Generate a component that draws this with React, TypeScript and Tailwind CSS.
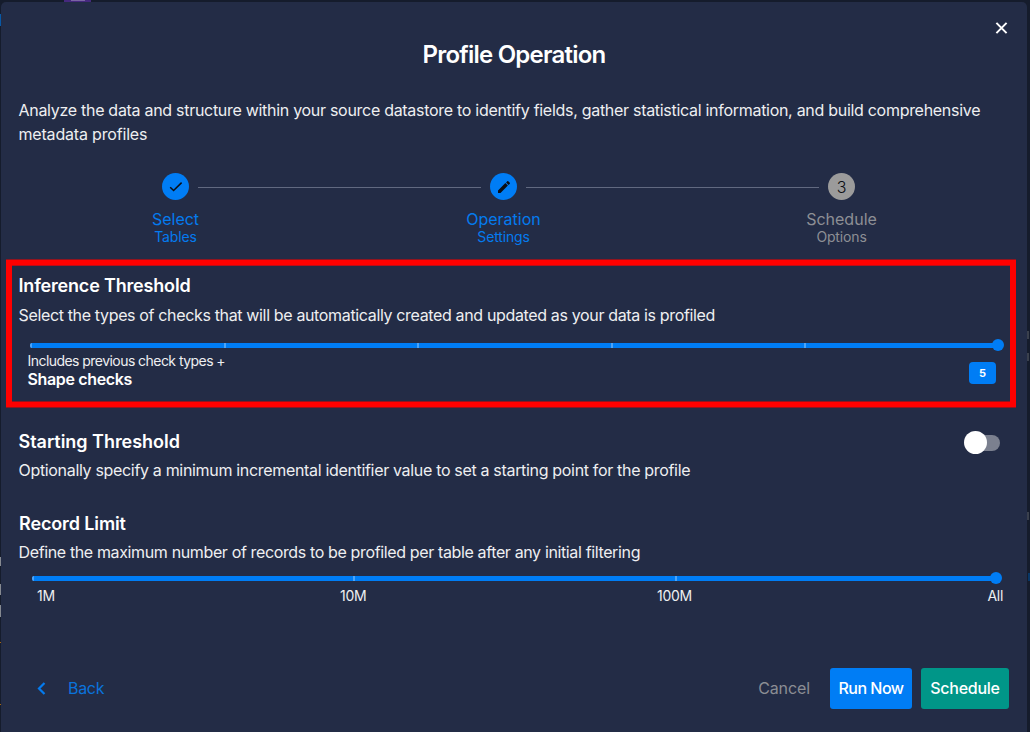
import type { ReactNode } from "react";

function Step({ title, subtitle, tone, children }: { title: string; subtitle: string; tone: "active" | "idle"; children: ReactNode }) {
  const active = tone === "active";
  return (
    <div className={`flex w-[27px] shrink-0 flex-col items-center whitespace-nowrap ${active ? "text-[#047bef]" : "text-[#8d8f95]"}`}>
      <div className={`flex size-[27px] shrink-0 items-center justify-center rounded-full text-[#0b0e14] ${active ? "bg-[#007df5]" : "bg-[#9b9b9b]"}`}>
        {children}
      </div>
      <div className="mt-[9px] h-5 text-[16px] leading-5">{title}</div>
      <div className="h-4 text-[14px] leading-4 tracking-[-0.15px]">{subtitle}</div>
    </div>
  );
}

function Slider({ ticks }: { ticks: number }) {
  return (
    <div className="relative h-[5px] rounded-l-sm bg-[#007df5]">
      {Array.from({ length: ticks }, (_, i) => (
        <span key={i} className="absolute top-0 h-[5px] w-[2px] bg-[#4da4f8] first:rounded-l-sm" style={{ left: `${(i * 100) / ticks}%` }} />
      ))}
      <span className="absolute -right-[6px] -top-[4px] size-[12px] rounded-full bg-[#007df5]" />
    </div>
  );
}

export default function App() {
  return (
    <div className="relative h-[732px] w-[1030px] overflow-hidden bg-[#151c2c] pl-px pt-[2px] font-['Inter',sans-serif] text-[16px] text-[#eeeff1]">
      <div className="absolute left-[64px] top-0 h-[2px] w-[27px] bg-[#45297e]" />
      <div className="absolute left-[71px] top-0 h-px w-[14px] bg-[#7a64a3]" />
      <div className="absolute left-0 top-[14px] h-[12px] w-px bg-[#0858a5]" />
      <div className="absolute left-0 top-[557px] h-[9px] w-px bg-[#858991]" />
      <div className="absolute left-0 top-[584px] h-[11px] w-px bg-[#858991]" />
      <div className="absolute left-0 top-[605px] h-[12px] w-px bg-[#858991]" />
      <div className="absolute left-0 top-[642px] h-px w-px bg-[#a4650f]" />
      <div className="absolute left-0 top-[704px] h-px w-px bg-[#a4650f]" />
      <div className="absolute left-[1027px] top-[331px] h-[8px] w-[2px] bg-[#3a404d]" />
      <div className="absolute left-[1027px] top-[353px] h-[8px] w-[2px] bg-[#3a404d]" />
      <div className="absolute left-[1027px] top-[512px] h-[8px] w-[2px] bg-[#3a404d]" />
      <div className="absolute left-[1028px] top-[573px] h-[8px] w-[2px] bg-[#083767]" />

      <div className="relative flex h-[736px] w-[1026px] flex-col rounded-[5px] bg-[#232c46]">
        <button className="absolute left-[994px] top-[20px]" aria-label="Close">
          <svg width="13" height="12" viewBox="0 0 13 12" stroke="#fff" strokeWidth="2" fill="none">
            <path d="M1.4 0.9 11.6 11.1M11.6 0.9 1.4 11.1" />
          </svg>
        </button>
        <h1 className="mt-[37px] h-8 whitespace-nowrap text-center text-[24px] font-semibold leading-8 tracking-[-0.77px] text-white">Profile Operation</h1>
        <p className="ml-[17.5px] mt-[27px] h-12 whitespace-nowrap leading-6 tracking-[-0.292px]">
          Analyze the data and structure within your source datastore to identify fields, gather statistical information, and build comprehensive
          <br />
          <span className="tracking-[-0.18px]">metadata profiles</span>
        </p>

        <div className="ml-[161px] mt-[27px] flex h-[86px] w-[693px] items-start">
          <Step title="Select" subtitle="Tables" tone="active">
            <svg width="14" height="14" viewBox="0 0 14 14" fill="none" stroke="#0b0e14" strokeWidth="1.5">
              <path d="M1.2 7.2 4.6 10.5 12.6 2.6" />
            </svg>
          </Step>
          <div className="mx-[9px] mt-[14px] h-px w-[283px] bg-[#616980]" />
          <Step title="Operation" subtitle="Settings" tone="active">
            <svg width="16" height="16" viewBox="0 0 24 24" fill="#0b0e14">
              <path d="M20.71 7.04c.39-.39.39-1.04 0-1.41l-2.34-2.34c-.37-.39-1.02-.39-1.41 0l-1.84 1.83 3.75 3.75M3 17.25V21h3.75L17.81 9.93l-3.75-3.75z" />
            </svg>
          </Step>
          <div className="mx-[9px] mt-[14px] h-px w-[293px] bg-[#616980]" />
          <Step title="Schedule" subtitle="Options" tone="idle">
            <span className="text-[16px] font-light leading-none">3</span>
          </Step>
        </div>

        <section className="ml-[5px] mt-px h-[147px] w-[1010px] border-x-[6px] border-y-[5px] border-[#ff0000] pl-[6.5px] pt-[9px] shadow-[0_-1px_#90141f,0_1px_#90141f,inset_0_1px_#b80d18,inset_0_-1px_#90141f]">
          <h2 className="h-6 whitespace-nowrap text-[18px] font-semibold leading-6 tracking-[-0.18px] text-white">Inference Threshold</h2>
          <p className="mt-[5px] h-6 whitespace-nowrap leading-6 tracking-[-0.35px]">Select the types of checks that will be automatically created and updated as your data is profiled</p>
          <div className="ml-[11.5px] mt-[16px] w-[968px]">
            <Slider ticks={5} />
          </div>
          <div className="ml-[9.5px] mt-[4px] flex w-[968px] justify-between whitespace-nowrap">
            <div>
              <div className="-ml-[0.5px] h-[18px] text-[14px] leading-[18px] tracking-[-0.55px]">Includes previous check types +</div>
              <div className="-ml-[0.5px] h-[18px] text-[16px] font-semibold leading-[18px] tracking-[-0.35px] text-white">Shape checks</div>
            </div>
            <div className="mt-[10px] flex h-[22px] w-[27px] items-center justify-center rounded-[4px] bg-[#007df5] text-[11px] font-bold text-white">5</div>
          </div>
        </section>

        <section className="ml-[18px] mt-[23px] flex h-[52px] w-[981px] justify-between">
          <div className="-ml-[0.5px] whitespace-nowrap">
            <h2 className="h-6 text-[18px] font-semibold leading-6 tracking-[-0.03px] text-white">Starting Threshold</h2>
            <p className="mt-[4px] h-6 leading-6 tracking-[-0.325px]">Optionally specify a minimum incremental identifier value to set a starting point for the profile</p>
          </div>
          <div className="mt-[5px] flex h-[16px] w-[34px] items-center rounded-full bg-[#7b808f]">
            <div className="-ml-[2px] -mt-px size-[23px] shrink-0 rounded-full bg-white" />
          </div>
        </section>

        <section className="ml-[18px] mt-[30px] h-[96px] whitespace-nowrap">
          <h2 className="h-6 text-[18px] font-semibold leading-6 tracking-[-0.12px] text-white">Record Limit</h2>
          <p className="-ml-[0.5px] mt-[4px] h-6 leading-6 tracking-[-0.365px]">Define the maximum number of records to be profiled per table after any initial filtering</p>
          <div className="ml-[13px] mt-[12px] w-[964px]">
            <Slider ticks={3} />
          </div>
          <div className="ml-[18px] mt-[7px] flex h-4 w-[966px] justify-between text-[14px] leading-4 tracking-[-0.3px]">
            <span className="w-[303px]">1M</span>
            <span className="w-[317px]">10M</span>
            <span className="flex-1">100M</span>
            <span>All</span>
          </div>
        </section>

        <footer className="ml-[36px] mt-[60px] flex h-[41px] w-[972px] items-center whitespace-nowrap">
          <svg width="9" height="13" viewBox="0 0 9 13" fill="none" stroke="#047bef" strokeWidth="2.2">
            <path d="M7.5 1 2 6.5 7.5 12" />
          </svg>
          <span className="ml-[22px] pb-[2px] tracking-[-0.3px] text-[#0a73dc]">Back</span>
          <span className="ml-auto pb-[2px] tracking-[-0.1px] text-[#8b8d94]">Cancel</span>
          <button className="ml-[20px] h-[41px] w-[82px] rounded-[3px] bg-[#007df5] pb-[2px] font-medium tracking-[-0.5px] text-white">Run Now</button>
          <button className="ml-[9px] h-[41px] w-[88px] rounded-[3px] bg-[#009688] pb-[2px] font-medium tracking-[-0.25px] text-white">Schedule</button>
        </footer>
      </div>
    </div>
  );
}
